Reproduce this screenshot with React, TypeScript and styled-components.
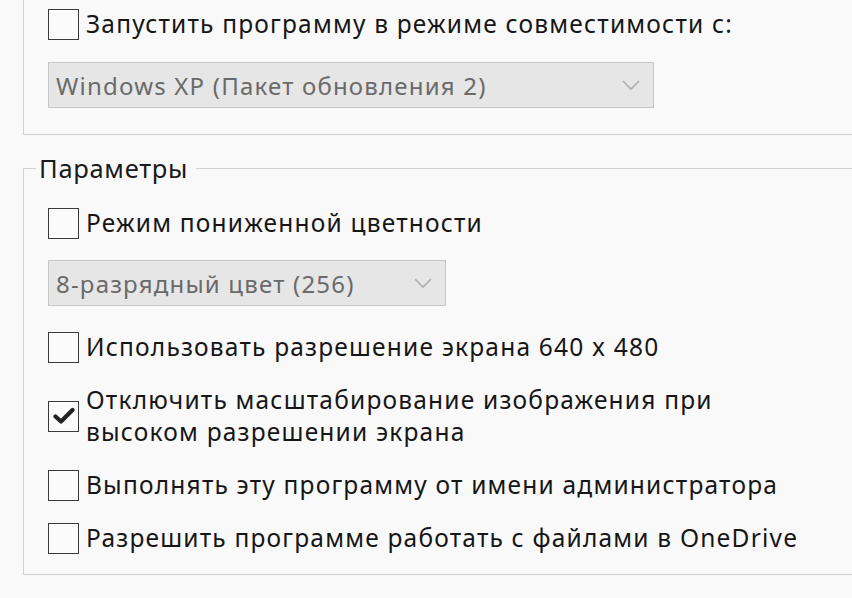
import { FC } from "react";
import styled, { createGlobalStyle } from "styled-components";

const GlobalStyle = createGlobalStyle`
  html, body {
    margin: 0;
    padding: 0;
    background: #f9f9f9;
  }
  body {
    font-family: "Noto Sans", "Liberation Sans", sans-serif;
    color: #1a1a1a;
    overflow: hidden;
  }
`;

interface CheckRowProps {
  label: string;
  checked?: boolean;
}

interface SelectProps {
  value: string;
  width: number;
}

const CheckRow: FC<CheckRowProps> = ({ label, checked }) => {
  return (
    <Row>
      <Box>
        {checked && (
          <svg width="22" height="18" viewBox="0 0 22 18">
            <path
              d="M2.5 9.5 L8 14.5 L19.5 3"
              fill="none"
              stroke="#222"
              strokeWidth="4.2"
              strokeLinecap="round"
              strokeLinejoin="round"
            />
          </svg>
        )}
      </Box>
      <Label>{label}</Label>
    </Row>
  );
};

const Select: FC<SelectProps> = ({ value, width }) => {
  return (
    <SelectBox width={width}>
      <span>{value}</span>
      <svg width="18" height="12" viewBox="0 0 18 12">
        <path
          d="M1 2 L9 10 L17 2"
          fill="none"
          stroke="#b0b0b0"
          strokeWidth="1.6"
        />
      </svg>
    </SelectBox>
  );
};

const App: FC = () => {
  return (
    <Page>
      <GlobalStyle />
      <TopGroup>
        <CheckRow label="Запустить программу в режиме совместимости с:" />
        <Select value="Windows XP (Пакет обновления 2)" width={606} />
      </TopGroup>
      <Group>
        <Legend>Параметры</Legend>
        <Items>
          <CheckRow label="Режим пониженной цветности" />
          <Select value="8-разрядный цвет (256)" width={398} />
          <CheckRow label="Использовать разрешение экрана 640 x 480" />
          <CheckRow
            checked
            label={"Отключить масштабирование изображения при\nвысоком разрешении экрана"}
          />
          <CheckRow label="Выполнять эту программу от имени администратора" />
          <CheckRow label="Разрешить программе работать с файлами в OneDrive" />
        </Items>
      </Group>
    </Page>
  );
};

export default App;

const Page = styled.div`
  width: 852px;
  height: 598px;
  padding-left: 23px;
  box-sizing: border-box;
  overflow: hidden;
`;

const TopGroup = styled.div`
  display: flex;
  flex-direction: column;
  gap: 22px;
  height: 135px;
  box-sizing: border-box;
  padding: 8px 0 0 24px;
  border-left: 1px solid #d2d2d2;
  border-bottom: 1px solid #d2d2d2;
`;

const Group = styled.fieldset`
  margin: 17px 0 0 0;
  padding: 0 0 0 24px;
  height: 423px;
  box-sizing: border-box;
  border: 1px solid #d2d2d2;
  border-right: none;
  min-width: 0;
`;

const Legend = styled.legend`
  margin-left: -12px;
  padding: 0 8px 0 3px;
  font-size: 25.5px;
  line-height: 32px;
  letter-spacing: 0.7px;
  color: #1a1a1a;
`;

const Items = styled.div`
  display: flex;
  flex-direction: column;
  padding-top: 23px;
  gap: 21px;
`;

const Row = styled.div`
  display: flex;
  align-items: center;
  gap: 7px;
`;

const Box = styled.div`
  flex: none;
  width: 31px;
  height: 31px;
  box-sizing: border-box;
  border: 1.5px solid #3a3a3a;
  background: #fbfbfb;
  display: flex;
  align-items: center;
  justify-content: center;
`;

const Label = styled.div`
  font-size: 24.5px;
  line-height: 32px;
  letter-spacing: 1.2px;
  white-space: pre-line;
  color: #161616;
`;

const SelectBox = styled.div<{ width: number }>`
  width: ${(p) => p.width}px;
  height: 46px;
  flex: none;
  box-sizing: border-box;
  background: #e6e6e6;
  border: 1px solid #c6c6c6;
  display: flex;
  align-items: center;
  justify-content: space-between;
  padding: 0 13px 0 7px;
  font-size: 24px;
  letter-spacing: 1.2px;
  color: #6a6a6a;

  & + * {
    margin-top: 4px;
  }
`;
